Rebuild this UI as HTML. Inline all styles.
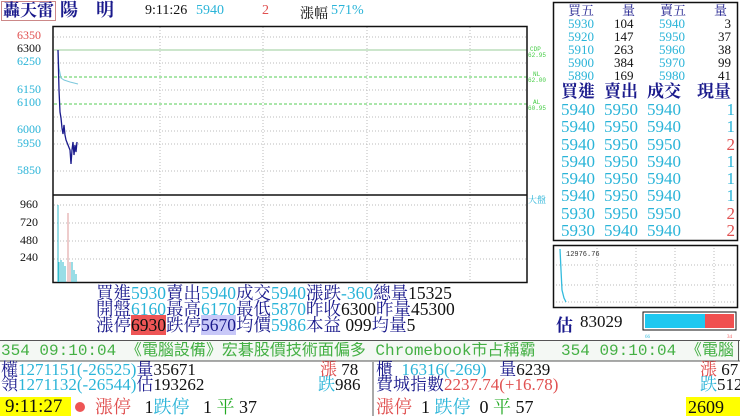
<!DOCTYPE html>
<html><head><meta charset="utf-8"><style>
*{margin:0;padding:0;box-sizing:border-box}
body{width:740px;height:416px;background:#fff;position:relative;overflow:hidden;font-family:"Liberation Serif","Noto Serif CJK TC",serif;color:#1a1a8c}
.a{position:absolute;white-space:nowrap}
.c{color:#2ab4d8}.r{color:#e05050}.k{color:#111}.n{color:#1a1a8c}
.s{font-size:12px;line-height:12px}
.i{font-size:17.5px;line-height:16px;letter-spacing:0}
.ob{font-size:13px;line-height:13px}
.rt{font-size:17px;line-height:17px}
.b{font-size:17px;line-height:15px}
</style></head><body>
<div class="a" style="left:1px;top:1px;border:1px solid #c88;font-size:17px;line-height:18px;font-weight:bold;padding:0 1px">轟天雷</div>
<div class="a" style="left:60px;top:1px;font-size:18px;line-height:18px;font-weight:bold">陽　明</div>
<div class="a k" style="left:145px;top:3px;font-size:14px">9:11:26</div>
<div class="a c" style="left:196px;top:3px;font-size:14px">5940</div>
<div class="a r" style="left:262px;top:3px;font-size:14px">2</div>
<div class="a k" style="left:300px;top:3px;font-size:14px">漲幅</div>
<div class="a c" style="left:331px;top:3px;font-size:14px">571%</div>
<div class="a s r" style="left:17px;top:29px">6350</div>
<div class="a s k" style="left:17px;top:42px">6300</div>
<div class="a s c" style="left:17px;top:55px">6250</div>
<div class="a s c" style="left:17px;top:83px">6150</div>
<div class="a s c" style="left:17px;top:96px">6100</div>
<div class="a s c" style="left:17px;top:123px">6000</div>
<div class="a s c" style="left:17px;top:137px">5950</div>
<div class="a s c" style="left:17px;top:164px">5850</div>
<div class="a s k" style="left:20px;top:198px">960</div>
<div class="a s k" style="left:20px;top:216px">720</div>
<div class="a s k" style="left:20px;top:234px">480</div>
<div class="a s k" style="left:20px;top:251px">240</div>
<svg class="a" style="left:0;top:0" width="740" height="416">
<g fill="none" stroke="#bbb" stroke-dasharray="1,2" stroke-width="1">
<line x1="160" y1="27" x2="160" y2="283"/><line x1="263" y1="27" x2="263" y2="283"/><line x1="367" y1="27" x2="367" y2="283"/><line x1="470" y1="27" x2="470" y2="283"/>
<line x1="54" y1="37" x2="527" y2="37"/><line x1="54" y1="63" x2="527" y2="63"/><line x1="54" y1="90" x2="527" y2="90"/><line x1="54" y1="117" x2="527" y2="117"/><line x1="54" y1="131" x2="527" y2="131"/><line x1="54" y1="144" x2="527" y2="144"/><line x1="54" y1="171" x2="527" y2="171"/>
<line x1="54" y1="205" x2="527" y2="205"/><line x1="54" y1="223" x2="527" y2="223"/><line x1="54" y1="241" x2="527" y2="241"/><line x1="54" y1="259" x2="527" y2="259"/>
</g>
<g stroke="#5c5" stroke-dasharray="3,2"><line x1="54" y1="50" x2="527" y2="50"/><line x1="54" y1="77" x2="527" y2="77"/><line x1="54" y1="104" x2="527" y2="104"/></g>
<line x1="54" y1="50" x2="527" y2="50" stroke="#9c9" stroke-width="1"/>
<rect x="53" y="26.5" width="474" height="256" fill="none" stroke="#111" stroke-width="1.5"/>
<line x1="53" y1="195" x2="527" y2="195" stroke="#111" stroke-width="1.5"/>
<polyline points="58,50 59,68 61,78 64,80 70,82 78,84" fill="none" stroke="#7cc8dc"/>
<polyline points="58,50 59,90 60,112 61,118 62,128 63,134 64,125 65,135 66,140 68,145 70,150 71,164 72,150 73,142 74,155 75,145 76,152 77,142" fill="none" stroke="#1a1a8c" stroke-width="1.3"/>
<g stroke="#3bc" stroke-width="1"><line x1="58" y1="282" x2="58" y2="205"/><line x1="59" y1="282" x2="59" y2="262"/><line x1="61" y1="282" x2="61" y2="260"/><line x1="63" y1="282" x2="63" y2="262"/><line x1="65" y1="282" x2="65" y2="266"/><line x1="72" y1="282" x2="72" y2="262"/><line x1="74" y1="282" x2="74" y2="270"/><line x1="76" y1="282" x2="76" y2="274"/></g>
<g stroke="#d99"><line x1="68" y1="282" x2="68" y2="213"/><line x1="70" y1="282" x2="70" y2="262"/></g>
<text x="530" y="51" font-family="Liberation Mono" font-size="6" fill="#4c4">CDP</text><text x="528" y="57" font-family="Liberation Mono" font-size="6" fill="#4c4">62.95</text>
<text x="533" y="76" font-family="Liberation Mono" font-size="6" fill="#4c4">NL</text><text x="528" y="82" font-family="Liberation Mono" font-size="6" fill="#4c4">62.00</text>
<text x="533" y="104" font-family="Liberation Mono" font-size="6" fill="#4c4">AL</text><text x="528" y="110" font-family="Liberation Mono" font-size="6" fill="#4c4">60.95</text>
<rect x="553.5" y="2.5" width="184" height="238" fill="none" stroke="#111" stroke-width="1.5"/>
<rect x="553.5" y="245.5" width="184" height="62" fill="none" stroke="#111" stroke-width="1.5"/>
<g stroke="#bbb" stroke-dasharray="1,2"><line x1="597" y1="248" x2="597" y2="306"/><line x1="636" y1="248" x2="636" y2="306"/><line x1="675" y1="248" x2="675" y2="306"/><line x1="714" y1="248" x2="714" y2="306"/><line x1="556" y1="265" x2="736" y2="265"/><line x1="556" y1="285" x2="736" y2="285"/><line x1="556" y1="302" x2="736" y2="302"/></g>
<polyline points="560,249 561,270 562,290 564,298 566,302" fill="none" stroke="#3bd" stroke-width="1.3"/>
<text x="566" y="256" font-family="Liberation Mono" font-size="7" fill="#333">12976.76</text>
<rect x="643" y="312" width="93" height="18" fill="none" stroke="#111"/>
<rect x="645" y="314" width="60" height="14" fill="#1ec8f0"/><rect x="705" y="314" width="29" height="14" fill="#f05050"/>
<text x="645" y="338" font-size="5" fill="#3bd">66</text><text x="727" y="338" font-size="5" fill="#e55">34</text>
<rect x="0" y="340" width="740" height="21" fill="#f4f8f4"/>
<line x1="0" y1="340.5" x2="740" y2="340.5" stroke="#555"/>
<line x1="0" y1="361" x2="740" y2="361" stroke="#555"/>
<line x1="738.5" y1="341" x2="738.5" y2="361" stroke="#555"/>
<line x1="373" y1="362" x2="373" y2="416" stroke="#555"/>
<rect x="0" y="397" width="71" height="19" fill="#ffff00"/>
<rect x="686" y="397" width="54" height="19" fill="#ffff00"/>
<circle cx="80" cy="407" r="5" fill="#e55"/>
</svg>
<div class="a c" style="left:528px;top:193px;font-size:9px">大盤</div>
<div class="a ob n" style="left:568px;top:4px">買五</div><div class="a ob n" style="left:622px;top:4px">量</div><div class="a ob n" style="left:660px;top:4px">賣五</div><div class="a ob n" style="left:714px;top:4px">量</div>
<div class="a ob c" style="left:568px;top:17px;line-height:13px">5930<br>5920<br>5910<br>5900<br>5890</div>
<div class="a ob k" style="left:614px;top:17px;line-height:13px">104<br>147<br>263<br>384<br>169</div>
<div class="a ob c" style="left:659px;top:17px;line-height:13px">5940<br>5950<br>5960<br>5970<br>5980</div>
<div class="a ob k" style="left:705px;top:17px;line-height:13px;text-align:right;width:26px">3<br>37<br>38<br>99<br>41</div>
<div class="a rt n" style="left:561px;top:83px;font-weight:bold">買進</div><div class="a rt n" style="left:604px;top:83px;font-weight:bold">賣出</div><div class="a rt n" style="left:647px;top:83px;font-weight:bold">成交</div><div class="a rt n" style="left:697px;top:83px;font-weight:bold">現量</div>
<div class="a c" style="left:561px;top:101px;font-size:17px;line-height:17.3px">5940<br>5940<br>5940<br>5940<br>5940<br>5940<br>5930<br>5930</div>
<div class="a c" style="left:604px;top:101px;font-size:17px;line-height:17.3px">5950<br>5950<br>5950<br>5950<br>5950<br>5950<br>5950<br>5940</div>
<div class="a c" style="left:647px;top:101px;font-size:17px;line-height:17.3px">5940<br>5940<br>5950<br>5940<br>5940<br>5940<br>5950<br>5940</div>
<div class="a" style="left:715px;top:101px;font-size:17px;line-height:17.3px;text-align:right;width:20px"><span class="c">1</span><br><span class="c">1</span><br><span class="r">2</span><br><span class="c">1</span><br><span class="c">1</span><br><span class="c">1</span><br><span class="r">2</span><br><span class="r">2</span></div>
<div class="a n" style="left:556px;top:311px;font-size:17px;font-weight:bold">估</div>
<div class="a k" style="left:580px;top:312px;font-size:17px">83029</div>
<div class="a i" style="left:96px;top:285px">買進<span class="c">5930</span>賣出<span class="c">5940</span>成交<span class="c">5940</span>漲跌<span class="c">-360</span>總量<span class="k">15325</span></div>
<div class="a i" style="left:96px;top:301px">開盤<span class="c">6160</span>最高<span class="c">6170</span>最低<span class="c">5870</span>昨收<span class="k">6300</span>昨量<span class="k">45300</span></div>
<div class="a i" style="left:96px;top:317px">漲停<span class="k" style="background:#ee5555">6930</span>跌停<span class="n" style="background:#c8c8f8">5670</span>均價<span class="c">5986</span>本益 <span class="k">099</span>均量<span class="k">5</span></div>
<div class="a" style="left:0;top:342px;width:738px;overflow:hidden;height:18px"><div style="padding-left:1px;font-size:16px;line-height:18px;color:#44b044;font-family:'Liberation Mono','Noto Sans CJK TC',monospace;white-space:nowrap">354 09:10:04 《電腦設備》宏碁股價技術面偏多 Chromebook市占稱霸　 354 09:10:04 《電腦</div></div>
<div class="a b" style="left:1px;top:362px">權<span class="c">1271151(-26525)</span>量<span class="k">35671</span></div>
<div class="a b r" style="left:320px;top:362px">漲 <span class="k">78</span></div>
<div class="a b" style="left:1px;top:377px">領<span class="c">1271132(-26544)</span>估<span class="k">193262</span></div>
<div class="a b c" style="left:318px;top:377px">跌<span class="k">986</span></div>
<div class="a k" style="left:5px;top:398px;font-size:19px;line-height:18px">9:11:27</div>
<div class="a" style="left:95px;top:398px;font-size:18px;line-height:18px"><span class="r">漲停</span>&nbsp;&nbsp;&nbsp;<span class="k">1</span><span class="c">跌停</span>&nbsp;&nbsp;&nbsp;<span class="k">1</span>&nbsp;<span style="color:#2a2">平</span>&nbsp;<span class="k">37</span></div>
<div class="a b" style="left:376px;top:362px">櫃 &nbsp;<span class="c">16316(-269)</span> &nbsp; 量<span class="k">6239</span></div>
<div class="a b r" style="left:700px;top:362px">漲 <span class="k">67</span></div>
<div class="a b" style="left:376px;top:377px">費城指數<span class="r">2237.74(+16.78)</span></div>
<div class="a b c" style="left:700px;top:377px">跌<span class="k">512</span></div>
<div class="a" style="left:376px;top:398px;font-size:18px;line-height:18px"><span class="r">漲停</span>&nbsp;&nbsp;<span class="k">1</span>&nbsp;<span class="c">跌停</span>&nbsp;&nbsp;<span class="k">0</span>&nbsp;<span style="color:#2a2">平</span>&nbsp;<span class="k">57</span></div>
<div class="a k" style="left:688px;top:398px;font-size:18px;line-height:18px">2609</div>
</body></html>
